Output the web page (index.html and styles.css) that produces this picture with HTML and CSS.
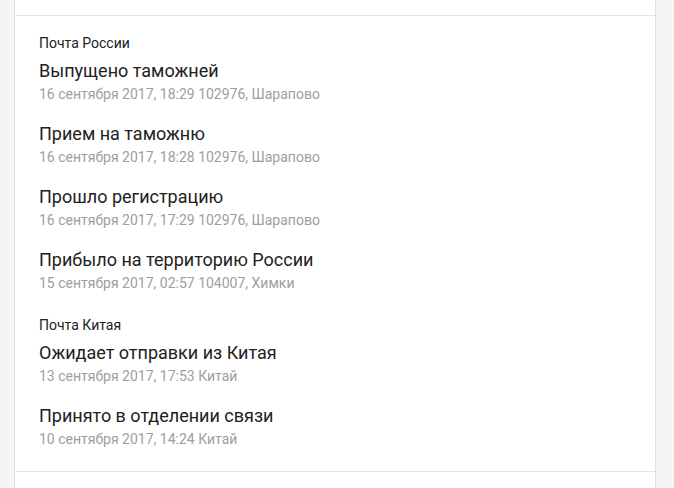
FILE: index.html
```html
<!DOCTYPE html>
<html lang="ru">
<head>
    <link rel="stylesheet" href="styles.css">
    <meta charset="UTF-8">
    <title>Отслеживание</title>
</head>
<body>
    <div class="card">
        <div class="card-top"></div>
        <div class="history">
            <div class="group">
                <div class="group-label">Почта России</div>
                <div class="item">
                    <div class="item-title">Выпущено таможней</div>
                    <div class="item-sub">16 сентября 2017, 18:29 102976, Шарапово</div>
                </div>
                <div class="item">
                    <div class="item-title">Прием на таможню</div>
                    <div class="item-sub">16 сентября 2017, 18:28 102976, Шарапово</div>
                </div>
                <div class="item">
                    <div class="item-title">Прошло регистрацию</div>
                    <div class="item-sub">16 сентября 2017, 17:29 102976, Шарапово</div>
                </div>
                <div class="item">
                    <div class="item-title">Прибыло на территорию России</div>
                    <div class="item-sub">15 сентября 2017, 02:57 104007, Химки</div>
                </div>
            </div>
            <div class="group">
                <div class="group-label">Почта Китая</div>
                <div class="item">
                    <div class="item-title">Ожидает отправки из Китая</div>
                    <div class="item-sub">13 сентября 2017, 17:53 Китай</div>
                </div>
                <div class="item">
                    <div class="item-title">Принято в отделении связи</div>
                    <div class="item-sub">10 сентября 2017, 14:24 Китай</div>
                </div>
            </div>
        </div>
        <div class="card-bottom"></div>
    </div>
</body>
</html>
```
FILE: styles.css
```css
body {
    margin: 0;
    background-color: #f5f5f5;
    font-family: Roboto, "Liberation Sans", sans-serif;
    color: #212121;
}

.card {
    margin: 0 18px 0 14px;
    background-color: #fff;
    border-left: 1px solid #e0e0e0;
    border-right: 1px solid #e0e0e0;
}

.card-top {
    height: 15px;
    border-bottom: 1px solid #e5e5e5;
}

.card-bottom {
    height: 20px;
    border-top: 1px solid #e5e5e5;
}

.history {
    padding: 18px 24px 4px;
}

.group + .group {
    margin-top: 5px;
}

.group-label {
    font-size: 14px;
    line-height: 18px;
    color: #212121;
    margin-bottom: 7px;
}

.item {
    padding-bottom: 17px;
}

.item-title {
    font-size: 18px;
    line-height: 24px;
}

.item-sub {
    font-size: 14px;
    line-height: 22px;
    color: #9e9e9e;
}
```
